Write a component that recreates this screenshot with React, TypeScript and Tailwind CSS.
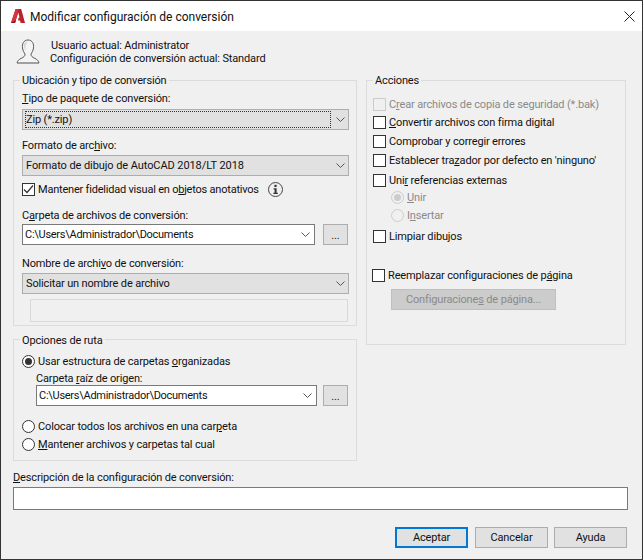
import React from "react";

const Chevron = () => (
  <svg width="9" height="5" viewBox="0 0 9 5" className="shrink-0" fill="none" stroke="#555" strokeWidth="1">
    <path d="M0.5 0.5 L4.5 4.5 L8.5 0.5" />
  </svg>
);

function Select({ text, focused, className = "", textClass = "" }: { text: string; focused?: boolean; className?: string; textClass?: string }) {
  return (
    <div className={`flex h-[21px] w-[327px] items-center border border-[#adadad] bg-[#e1e1e1] pl-[3px] pr-[3px] ${className}`}>
      <div className={`flex h-[15px] w-[304px] items-center ${focused ? "outline-1 outline-dotted outline-[#333]" : ""}`}>
        <span className={textClass}>{text}</span>
      </div>
      <span className="ml-[6px]"><Chevron /></span>
    </div>
  );
}

function Combo({ width, className = "" }: { width: string; className?: string }) {
  return (
    <div className={`flex h-[21px] items-center justify-between border border-[#7a7a7a] bg-white pl-[2px] pr-[4px] ${width} ${className}`}>
      <span className="tracking-[-0.27px]">C:\Users\Administrador\Documents</span>
      <Chevron />
    </div>
  );
}

const Dots = () => (
  <div className="flex h-[21px] w-[25px] items-end justify-center border border-[#adadad] bg-[#e1e1e1] pb-[3px] text-[#222] leading-none">...</div>
);

function Check({ checked, disabled }: { checked?: boolean; disabled?: boolean }) {
  return (
    <span className={`flex h-[13px] w-[13px] shrink-0 items-center justify-center border ${disabled ? "border-[#cccccc] bg-[#f0f0f0]" : "border-[#333] bg-white"}`}>
      {checked && (
        <svg width="11" height="11" viewBox="0 0 11 11" fill="none" stroke="#333" strokeWidth="1.2">
          <path d="M1 5.5 L4 8.5 L10 1.5" />
        </svg>
      )}
    </span>
  );
}

function Radio({ checked, disabled }: { checked?: boolean; disabled?: boolean }) {
  return (
    <span className={`flex h-[13px] w-[13px] shrink-0 items-center justify-center rounded-full border ${disabled ? "border-[#cccccc] bg-[#f0f0f0]" : "border-[#333] bg-white"}`}>
      {checked && <span className={`h-[7px] w-[7px] rounded-full ${disabled ? "bg-[#cccccc]" : "bg-[#333]"}`} />}
    </span>
  );
}

function Opt({ children, className = "", disabled }: { children: React.ReactNode; className?: string; disabled?: boolean }) {
  return (
    <div className={`flex h-[13px] items-center gap-[3px] whitespace-nowrap ${disabled ? "text-[#8a8a8a]" : ""} ${className}`}>
      {children}
    </div>
  );
}

const AutoLogo = () => (
  <svg width="16" height="16" viewBox="0 0 16 16">
    <path d="M5.6 1 H11.2 L15 15 H10.6 L10.1 12.6 H8 L8.6 9.8 H9.5 L8.4 4.6 L5 15 H1 Z" fill="#b9222a" />
    <path d="M5.6 1 H8.6 L5 15 H1 Z" fill="#d6353c" />
    <path d="M1 15 H5 L6 12 Z" fill="#8e1a20" />
  </svg>
);

const UserIcon = () => (
  <svg width="24" height="25" viewBox="0 0 24 25" fill="none">
    <path d="M12 1 C7.5 1 6 5 6.5 9 C6.8 12 8.5 14 9 15 C9.2 17 8 18 5 19.5 C3 20.5 1.5 21.5 1 24 H23 C22.5 21.5 21 20.5 19 19.5 C16 18 14.8 17 15 15 C15.5 14 17.2 12 17.5 9 C18 5 16.5 1 12 1 Z" fill="#f4f4f4" stroke="#5a5a5a" strokeWidth="1" />
    <path d="M8 5 C9 3 11 2.5 12 2.5 C9.5 4 9 8 10 12 C8.5 10 7.5 7 8 5 Z" fill="#d4d4d4" />
    <path d="M2 24 H22" stroke="#9a9a9a" />
  </svg>
);

const InfoIcon = () => (
  <svg width="15" height="15" viewBox="0 0 15 15" fill="none">
    <circle cx="7.5" cy="7.5" r="7" stroke="#444" fill="#f0f0f0" />
    <rect x="6.4" y="2.8" width="2.2" height="2.2" fill="#333" />
    <path d="M5.6 6.2 H8.6 V10.8 H9.8 V12 H5.4 V10.8 H6.6 V7.4 H5.6 Z" fill="#333" />
  </svg>
);

export default function App() {
  return (
    <div
      className="flex h-[560px] w-[643px] flex-col border border-[#333] bg-[#f0f0f0] text-[11px] leading-[14px] tracking-[-0.15px] text-[#111]"
      style={{ fontFamily: 'Roboto, "Liberation Sans", Arial, sans-serif' }}
    >
      <header className="flex h-[30px] shrink-0 items-center bg-white pl-[9px] pr-[6px]">
        <AutoLogo />
        <span className="ml-[4px] pt-[1px] text-[12px] tracking-normal">Modificar configuración de conversión</span>
        <svg className="ml-auto mr-[1px]" width="11" height="11" viewBox="0 0 11 11" stroke="#222" fill="none">
          <path d="M0.5 0.5 L10.5 10.5 M10.5 0.5 L0.5 10.5" />
        </svg>
      </header>

      <div className="flex flex-1 flex-col px-[12px]">
        <div className="flex h-[41px] items-start pl-[3px] pt-[8px]">
          <UserIcon />
          <div className="ml-[11px] leading-[13px]">
            <div>Usuario actual: Administrator</div>
            <div className="-ml-[1px]">Configuración de conversión actual: Standard</div>
          </div>
        </div>

        <div className="flex w-[613px] items-start justify-between">
          <div className="w-[344px]">
            <fieldset className="h-[254px] border border-[#dcdcdc] pl-[8px]">
              <legend className="-ml-[2px] h-[16px] px-[2px] leading-[18px]">Ubicación y tipo de conversión</legend>
              <div className="mt-[4px] h-[14px]"><u>T</u>ipo de paquete de conversión:</div>
              <Select text="Zip (*.zip)" focused className="mt-[3px]" />
              <div className="mt-[9px] h-[14px]">Formato de arc<u>h</u>ivo:</div>
              <Select text="Formato de dibujo de AutoCAD 2018/LT 2018" textClass="tracking-[-0.08px]" className="mt-[2px]" />
              <Opt className="mt-[7px] tracking-[-0.21px]">
                <Check checked />
                <span>Mantener fidelidad visual en o<u>b</u>jetos anotativos</span>
                <span className="ml-[6px]"><InfoIcon /></span>
              </Opt>
              <div className="mt-[13px] h-[14px]">C<u>a</u>rpeta de archivos de conversión:</div>
              <div className="mt-[1px] flex gap-[8px]">
                <Combo width="w-[293px]" />
                <Dots />
              </div>
              <div className="mt-[12px] h-[14px]">Nombre de archi<u>v</u>o de conversión:</div>
              <Select text="Solicitar un nombre de archivo" className="mt-[2px]" />
              <div className="ml-[8px] mt-[5px] h-[23px] w-[318px] border border-[#d9d9d9] bg-[#f0f0f0]" />
            </fieldset>

            <fieldset className="mt-[5px] h-[130px] border border-[#dcdcdc] pl-[8px]">
              <legend className="-ml-[2px] h-[16px] px-[2px] leading-[20px]">Opciones de ruta</legend>
              <Opt className="mt-[8px]"><Radio checked /><span>Usar estructura de carpetas <u>o</u>rganizadas</span></Opt>
              <div className="ml-[14px] mt-[4px] h-[13px]">Carpeta <u>r</u>aíz de origen:</div>
              <div className="flex gap-[6px] pl-[14px]">
                <Combo width="w-[281px]" />
                <Dots />
              </div>
              <Opt className="mt-[14px]"><Radio /><span>Colocar todos los archivos en una car<u>p</u>eta</span></Opt>
              <Opt className="mt-[5px]"><Radio /><span><u>M</u>antener archivos y carpetas tal cual</span></Opt>
            </fieldset>
          </div>

          <fieldset className="h-[273px] w-[260px] border border-[#dcdcdc] pl-[6px]">
            <legend className="h-[16px] px-[2px] leading-[18px]">Acciones</legend>
            <Opt disabled className="mt-[10px]"><Check disabled /><span>C<u>r</u>ear archivos de copia de seguridad (*.bak)</span></Opt>
            <Opt className="mt-[5px]"><Check /><span><u>C</u>onvertir archivos con firma digital</span></Opt>
            <Opt className="mt-[6px]"><Check /><span>Comprobar y corre<u>g</u>ir errores</span></Opt>
            <Opt className="mt-[6px]"><Check /><span>Establecer tra<u>z</u>ador por defecto en 'ninguno'</span></Opt>
            <Opt className="mt-[7px]"><Check /><span>Uni<u>r</u> referencias externas</span></Opt>
            <Opt disabled className="ml-[18px] mt-[4px]"><Radio checked disabled /><span><u>U</u>nir</span></Opt>
            <Opt disabled className="ml-[18px] mt-[5px]"><Radio disabled /><span>I<u>n</u>sertar</span></Opt>
            <Opt className="mt-[8px]"><Check /><span>Limpiar dibu<u>j</u>os</span></Opt>
            <Opt className="-ml-[1px] mt-[26px]"><Check /><span>Reemplazar configuraciones de p<u>á</u>gina</span></Opt>
            <div className="ml-[18px] mt-[7px] flex h-[21px] w-[165px] items-center justify-center border border-[#bfbfbf] bg-[#cccccc] text-[#8a8a8a]">
              <span>Configuracione<u>s</u> de página...</span>
            </div>
          </fieldset>
        </div>

        <div className="mt-[10px] h-[14px]"><u>D</u>escripción de la configuración de conversión:</div>
        <div className="mt-[2px] h-[23px] w-[615px] border border-[#7a7a7a] bg-white" />

        <div className="mt-[17px] flex justify-end pr-[3px]">
          <div className="flex h-[21px] w-[73px] items-center justify-center border-2 border-[#0078d7] bg-[#e1e1e1]">Aceptar</div>
          <div className="ml-[7px] flex h-[21px] w-[73px] items-center justify-center border border-[#adadad] bg-[#e1e1e1]">Cancelar</div>
          <div className="ml-[6px] flex h-[21px] w-[73px] items-center justify-center border border-[#adadad] bg-[#e1e1e1]">Ayuda</div>
        </div>
      </div>
    </div>
  );
}
